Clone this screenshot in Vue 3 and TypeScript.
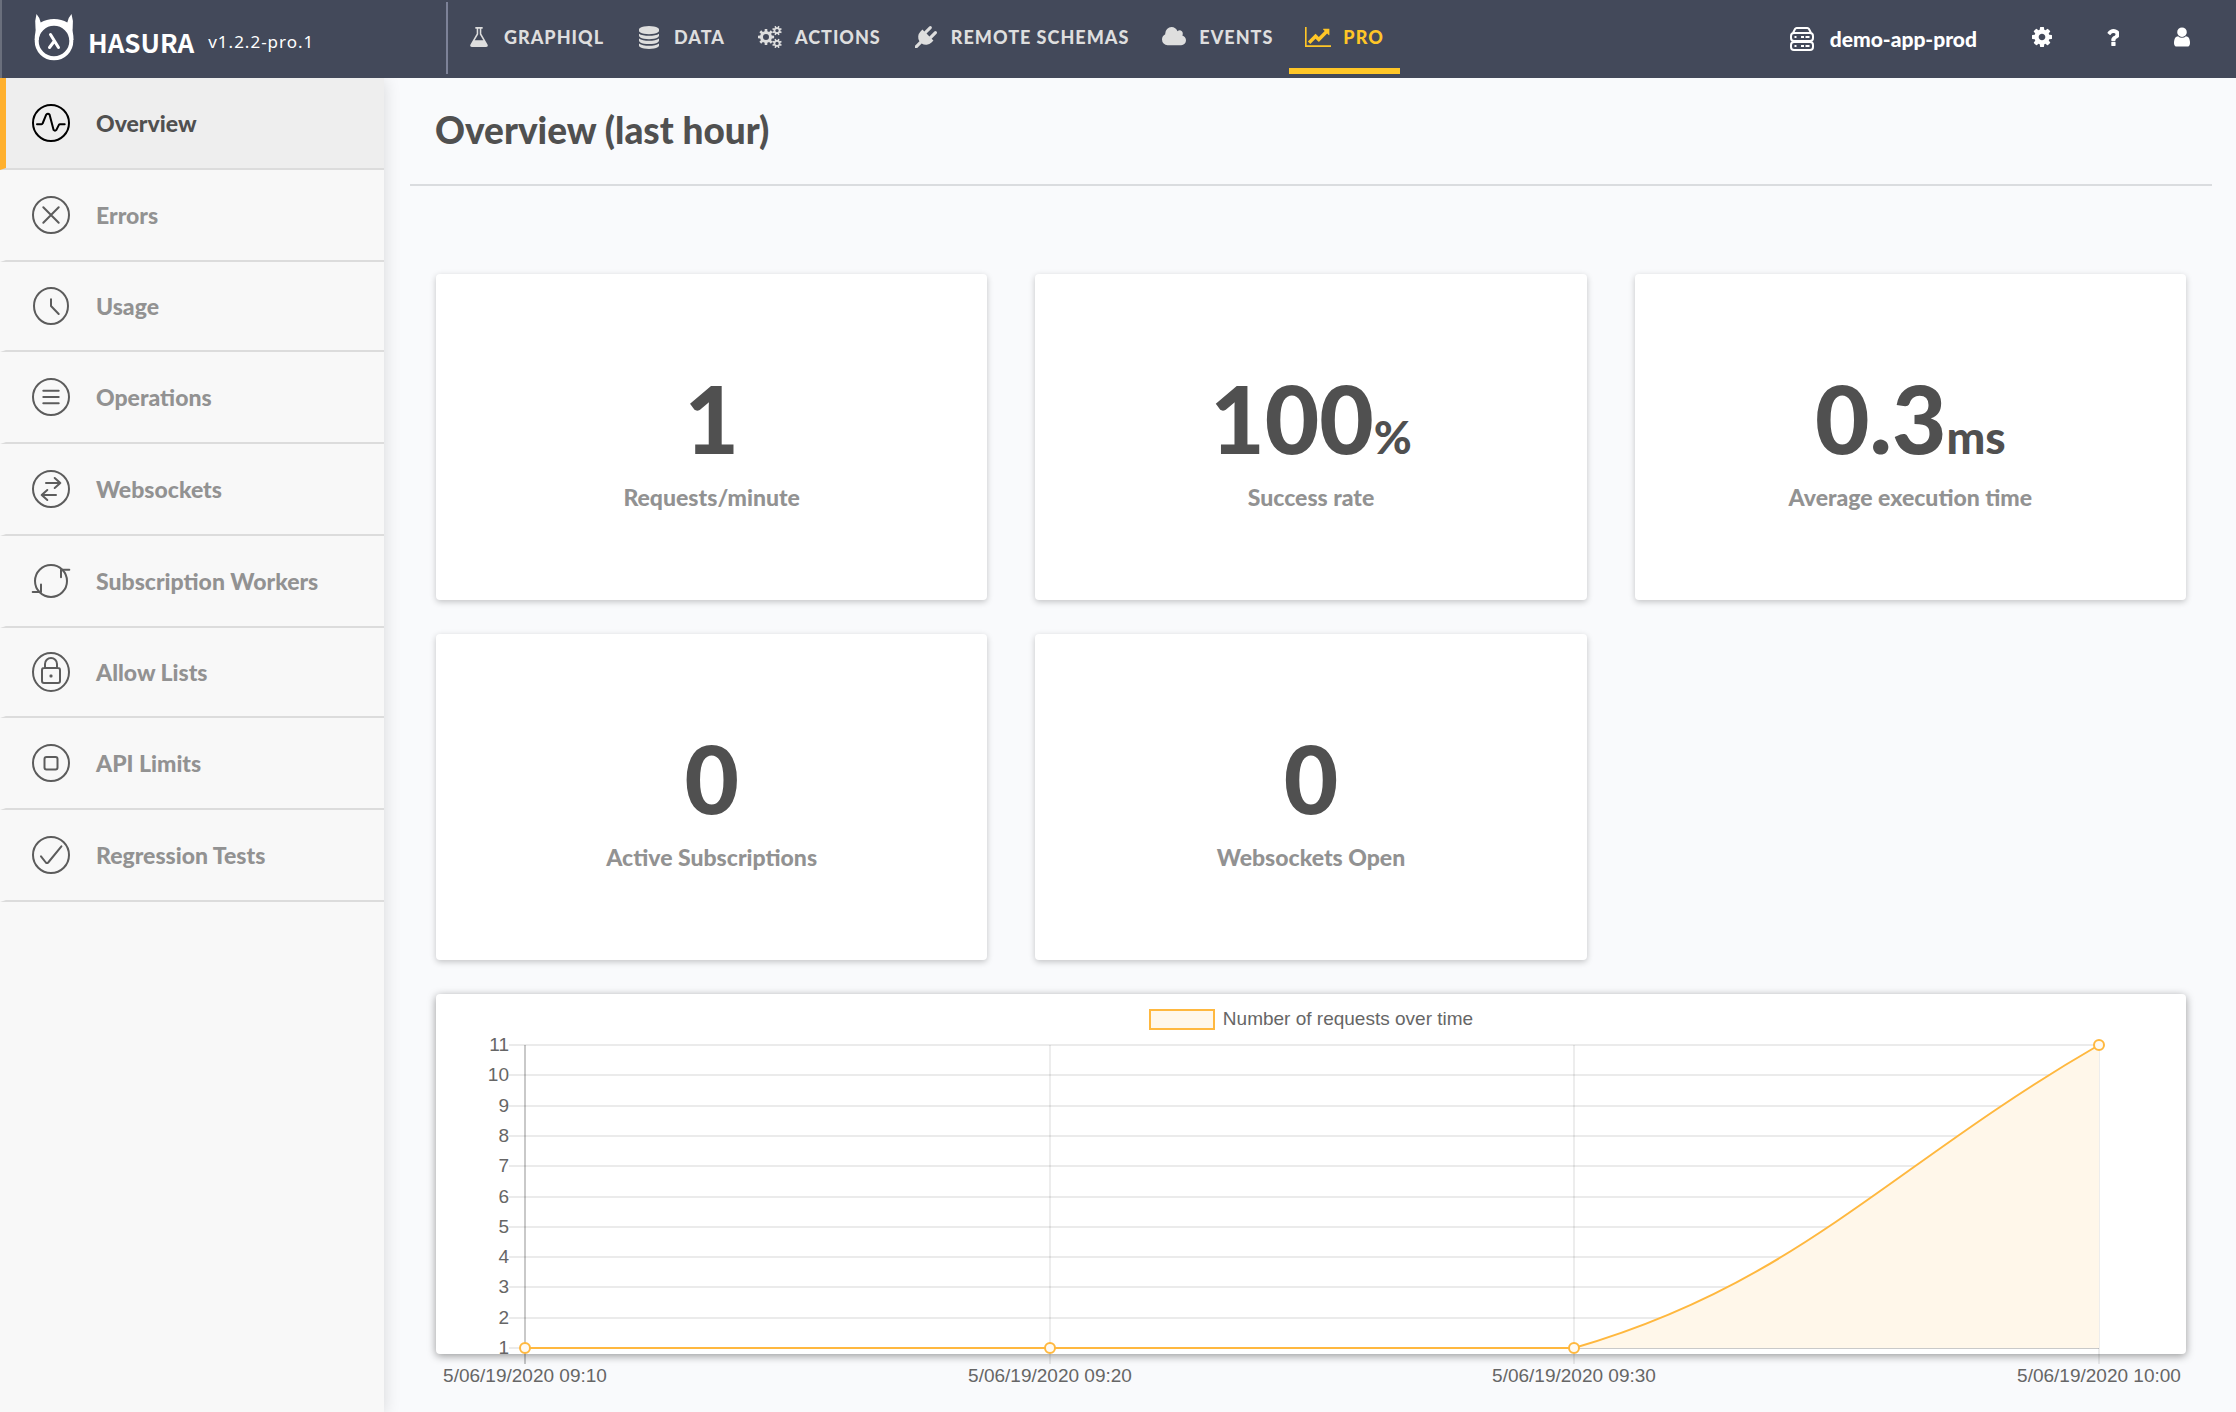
<script setup lang="ts">
import { computed, onBeforeUnmount, onMounted, ref } from 'vue'

/** Closed outline of a cog wheel, with its hole as a second subpath. */
function gearPath(cx: number, cy: number, outer: number, inner: number, hole: number, teeth: number, turn = 0): string {
  const step = (Math.PI * 2) / teeth
  const points: string[] = []
  for (let i = 0; i < teeth; i++) {
    const a = i * step + turn
    const corners: [number, number][] = [
      [inner, a - step * 0.3],
      [outer, a - step * 0.2],
      [outer, a + step * 0.2],
      [inner, a + step * 0.3],
    ]
    for (const [r, t] of corners) {
      points.push(`${(cx + r * Math.cos(t)).toFixed(2)} ${(cy + r * Math.sin(t)).toFixed(2)}`)
    }
  }
  const ring = `M${cx - hole} ${cy}a${hole} ${hole} 0 1 0 ${hole * 2} 0a${hole} ${hole} 0 1 0 ${-hole * 2} 0z`
  return `M${points.join('L')}z${ring}`
}

interface NavItem {
  label: string
  viewBox: string
  width: number
  height: number
  path: string
  active?: boolean
}

const navItems: NavItem[] = [
  {
    label: 'GRAPHIQL',
    viewBox: '150 128 1492 1536',
    width: 18,
    height: 20,
    path: 'M1591 1448q56 89 21.5 152.5t-140.5 63.5h-1152q-106 0-140.5-63.5t21.5-152.5l503-793v-399h-64q-26 0-45-19t-19-45 19-45 45-19h512q26 0 45 19t19 45-19 45-45 19h-64v399zm-779-725l-272 429h712l-272-429-20-31v-436h-128v436z',
  },
  {
    label: 'DATA',
    viewBox: '128 0 1536 1792',
    width: 20,
    height: 23,
    path: 'M896 768q237 0 443-43t325-127v170q0 69-103 128t-280 93.5-385 34.5-385-34.5-280-93.5-103-128v-170q119 84 325 127t443 43zm0 768q237 0 443-43t325-127v170q0 69-103 128t-280 93.5-385 34.5-385-34.5-280-93.5-103-128v-170q119 84 325 127t443 43zm0-384q237 0 443-43t325-127v170q0 69-103 128t-280 93.5-385 34.5-385-34.5-280-93.5-103-128v-170q119 84 325 127t443 43zm0-1152q208 0 385 34.5t280 93.5 103 128v128q0 69-103 128t-280 93.5-385 34.5-385-34.5-280-93.5-103-128v-128q0-69 103-128t280-93.5 385-34.5z',
  },
  {
    label: 'ACTIONS',
    viewBox: '0 0 24 22',
    width: 24,
    height: 22,
    path:
      gearPath(8, 11, 8.2, 6, 3, 8) +
      gearPath(19, 4.6, 4.9, 3.5, 1.7, 8, 0.39) +
      gearPath(19, 17.4, 4.9, 3.5, 1.7, 8, 0.39),
  },
  {
    label: 'REMOTE SCHEMAS',
    viewBox: '0 0 1792 1792',
    width: 22,
    height: 22,
    path: 'M1755 453q37 38 37 90.5t-37 90.5l-401 400 150 150-160 160q-163 163-389.5 186.5t-411.5-100.5l-362 362h-181v-181l362-362q-124-185-100.5-411.5t186.5-389.5l160-160 150 150 400-401q38-37 91-37t90 37 37 90.5-37 90.5l-400 401 234 234 401-400q38-37 91-37t90 37z',
  },
  {
    label: 'EVENTS',
    viewBox: '64 128 1920 1536',
    width: 24,
    height: 20,
    path: 'M1984 1152q0 159-112.5 271.5t-271.5 112.5h-1088q-185 0-316.5-131.5t-131.5-316.5q0-132 71-241.5t187-163.5q-2-28-2-43 0-212 150-362t362-150q158 0 286.5 88t187.5 230q70-62 166-62 106 0 181 75t75 181q0 75-41 138 129 30 213 134.5t84 239.5z',
  },
  {
    label: 'PRO',
    viewBox: '0 128 2048 1536',
    width: 26,
    height: 20,
    path: 'M2048 1536v128h-2048v-1536h128v1408h1920zm-128-1248v435q0 21-19.5 29.5t-35.5-7.5l-121-121-633 633q-10 10-23 10t-23-10l-233-233-416 416-192-192 585-585q10-10 23-10t23 10l233 233 464-464-121-121q-16-16-7.5-35.5t29.5-19.5h435q14 0 23 9t9 23z',
    active: true,
  },
]

interface SideItem {
  label: string
  rx: number
  ry: number
  path: string
  active?: boolean
  compact?: boolean
}

const sideItems: SideItem[] = [
  { label: 'Overview', rx: 18, ry: 18, path: 'M6 21.3h4.5q.8 0 1.1-.8l3.6-8.8q1.8-2 3.4 0l4 15.2q1.4 1.6 2.8 0l2.5-5q.4-.6 1.1-.6h4.7', active: true },
  { label: 'Errors', rx: 18, ry: 18, path: 'M12.3 12.3l15.4 15.4M27.7 12.3l-15.4 15.4' },
  { label: 'Usage', rx: 17, ry: 18, path: 'M20 13.3v6.7l7.7 8', compact: true },
  { label: 'Operations', rx: 18, ry: 18, path: 'M12.3 13.7h15.4M12.3 20h15.4M12.3 26.3h15.4' },
  { label: 'Websockets', rx: 18, ry: 18, path: 'M15 14h14.3M23.7 9l5.6 5-5.6 5M25 26h-14.3M16.3 21l-5.6 5 5.6 5' },
  { label: 'Subscription Workers', rx: 16, ry: 16, path: 'M38.3 8.7h-8.3v7.6M1.7 31h8.3v-7.6' },
  { label: 'Allow Lists', rx: 18, ry: 19, path: 'M13 16h14q2 0 2 2v11q0 2-2 2h-14q-2 0-2-2v-11q0-2 2-2zM14 16v-4a6 6 0 0 1 12 0v4M19.5 23.5h1v1h-1z', compact: true },
  { label: 'API Limits', rx: 18, ry: 18, path: 'M15.5 14h9q2 0 2 2v8.5q0 2-2 2h-9q-2 0-2-2v-8.5q0-2 2-2z' },
  { label: 'Regression Tests', rx: 18, ry: 18, path: 'M10 21.3l4.8 6.2q1.2 1.2 2.4 0l13.2-16.2' },
]

interface Metric {
  value: string
  unit?: string
  label: string
}

const metrics: Metric[] = [
  { value: '1', label: 'Requests/minute' },
  { value: '100', unit: '%', label: 'Success rate' },
  { value: '0.3', unit: 'ms', label: 'Average execution time' },
  { value: '0', label: 'Active Subscriptions' },
  { value: '0', label: 'Websockets Open' },
]

const samples = [
  { time: '5/06/19/2020 09:10', count: 1 },
  { time: '5/06/19/2020 09:20', count: 1 },
  { time: '5/06/19/2020 09:30', count: 1 },
  { time: '5/06/19/2020 10:00', count: 11 },
]

const chartBox = ref<HTMLElement | null>(null)
const chartWidth = ref(1750)
let observer: ResizeObserver | undefined

onMounted(() => {
  const el = chartBox.value
  if (!el) return
  chartWidth.value = el.clientWidth
  observer = new ResizeObserver(() => {
    chartWidth.value = el.clientWidth
  })
  observer.observe(el)
})
onBeforeUnmount(() => observer?.disconnect())

const plot = { left: 89, rightGap: 87, top: 1, height: 303, min: 1, max: 11 }

const right = computed(() => chartWidth.value - plot.rightGap)
const bottom = plot.top + plot.height

function yFor(count: number): number {
  return Math.round(bottom - ((count - plot.min) / (plot.max - plot.min)) * plot.height)
}

const points = computed(() =>
  samples.map((s, i) => ({
    x: Math.round(plot.left + ((right.value - plot.left) * i) / (samples.length - 1)),
    y: yFor(s.count),
    label: s.time,
  })),
)

const yTicks = Array.from({ length: plot.max - plot.min + 1 }, (_, i) => ({
  value: plot.max - i,
  y: yFor(plot.max - i),
}))

/** Smoothed line with a tension of 0.4, control points kept inside the plot. */
const line = computed(() => {
  const p = points.value
  const cap = (y: number) => Math.min(bottom, Math.max(plot.top, y))
  const controls = p.map((c, i) => {
    const a = p[Math.max(0, i - 1)]
    const b = p[Math.min(p.length - 1, i + 1)]
    const d0 = Math.hypot(c.x - a.x, c.y - a.y)
    const d1 = Math.hypot(b.x - c.x, b.y - c.y)
    const f0 = (0.4 * d0) / (d0 + d1)
    const f1 = (0.4 * d1) / (d0 + d1)
    return {
      inX: c.x - f0 * (b.x - a.x),
      inY: cap(c.y - f0 * (b.y - a.y)),
      outX: c.x + f1 * (b.x - a.x),
      outY: cap(c.y + f1 * (b.y - a.y)),
    }
  })
  let d = `M${p[0].x} ${p[0].y}`
  for (let i = 1; i < p.length; i++) {
    const from = controls[i - 1]
    const to = controls[i]
    d += `C${from.outX} ${from.outY} ${to.inX} ${to.inY} ${p[i].x} ${p[i].y}`
  }
  return d
})

const area = computed(() => `${line.value}V${bottom}H${plot.left}z`)
</script>

<template>
  <div class="app">
    <header class="topbar">
      <div class="brand">
        <svg class="logo" viewBox="0 0 40 50" width="40" height="50" aria-hidden="true">
          <path d="M2.5 1q3.2 3.4 4.2 8.6 5.6-3.6 13.3-3.6t13.3 3.6q1-5.2 4.2-8.6 2.3 7.2 1.2 14.2-.4 2 .1 4 .7 3 .7 7.8h-3.8a15.5 15.5 0 1 0-31 0h-4q0-4.8.7-7.8.5-2 .1-4-1.1-7 1-14.2z" />
          <circle cx="20" cy="28" r="17.3" class="logo-ring" />
          <path d="M16.5 21.5l8 13M20 28.5l-4.5 6" class="logo-lambda" />
        </svg>
        <span class="wordmark">HASURA</span>
        <span class="version">v1.2.2-pro.1</span>
      </div>
      <nav class="topnav">
        <a v-for="item in navItems" :key="item.label" href="#" class="topnav-link" :class="{ active: item.active }">
          <span class="topnav-icon">
            <svg :viewBox="item.viewBox" :width="item.width" :height="item.height" preserveAspectRatio="none" aria-hidden="true">
              <path :d="item.path" fill-rule="evenodd" />
            </svg>
          </span>
          <span>{{ item.label }}</span>
        </a>
      </nav>
      <div class="tools">
        <a href="#" class="project">
          <svg viewBox="0 0 24 24" width="24" height="24" class="server" aria-hidden="true">
            <path d="M3 6l2-4q.5-1 1.6-1h10.8q1.1 0 1.6 1l2 4" />
            <rect x="1" y="6" width="22" height="8" rx="3" />
            <rect x="1" y="15" width="22" height="8" rx="3" />
            <path d="M4.5 10h2M11 10h3M15.5 10h4M4.5 19h2M11 19h3M15.5 19h4" />
          </svg>
          <span>demo-app-prod</span>
        </a>
        <button type="button" class="tool" aria-label="Settings">
          <svg viewBox="128 128 1536 1536" width="20" height="20" aria-hidden="true">
            <path d="M1152 896q0-106-75-181t-181-75-181 75-75 181 75 181 181 75 181-75 75-181zm512-109v222q0 12-8 23t-20 13l-185 28q-19 54-39 91 35 50 107 138 10 12 10 25t-9 23q-27 37-99 108t-94 71q-12 0-26-9l-138-108q-44 23-91 38-16 136-29 186-7 28-36 28h-222q-14 0-24.5-8.5t-11.5-21.5l-28-184q-49-16-90-37l-141 107q-10 9-25 9-14 0-25-11-126-114-165-168-7-10-7-23 0-12 8-23 15-21 51-66.5t54-70.5q-27-50-41-99l-183-27q-13-2-21-12.5t-8-23.5v-222q0-12 8-23t19-13l186-28q14-46 39-92-40-57-107-138-10-12-10-24 0-10 9-23 26-36 98.5-107.5t94.5-71.5q13 0 26 10l138 107q44-23 91-38 16-136 29-186 7-28 36-28h222q14 0 24.5 8.5t11.5 21.5l28 184q49 16 90 37l142-107q9-9 24-9 13 0 25 10 129 119 165 170 7 8 7 22 0 12-8 23-15 21-51 66.5t-54 70.5q26 50 41 98l183 28q13 2 21 12.5t8 23.5z" />
          </svg>
        </button>
        <button type="button" class="tool" aria-label="Help">
          <svg viewBox="448 256 896 1280" width="12" height="17" aria-hidden="true">
            <path d="M1088 1256v240q0 16-12 28t-28 12h-240q-16 0-28-12t-12-28v-240q0-16 12-28t28-12h240q16 0 28 12t12 28zm316-600q0 54-15.5 101t-35 76.5-55 59.5-57.5 43.5-61 35.5q-41 23-68.5 65t-27.5 67q0 17-12 32.5t-28 15.5h-240q-15 0-25.5-18.5t-10.5-37.5v-45q0-83 65-156.5t143-108.5q59-27 84-56t25-76q0-42-46.5-74t-107.5-32q-65 0-108 29-35 25-107 115-13 16-31 16-12 0-25-8l-164-125q-13-10-15.5-25t5.5-28q160-266 464-266 80 0 161 31t146 83 106 127.5 41 158.5z" />
          </svg>
        </button>
        <button type="button" class="tool" aria-label="Account">
          <svg viewBox="256 128 1280 1536" width="16" height="20" aria-hidden="true">
            <path d="M1536 1399q0 109-62.5 187t-150.5 78h-854q-88 0-150.5-78t-62.5-187q0-85 8.5-160.5t31.5-152 58.5-131 94-89 134.5-34.5q131 128 313 128t313-128q76 0 134.5 34.5t94 89 58.5 131 31.5 152 8.5 160.5zm-256-887q0 159-112.5 271.5t-271.5 112.5-271.5-112.5-112.5-271.5 112.5-271.5 271.5-112.5 271.5 112.5 112.5 271.5z" />
          </svg>
        </button>
      </div>
    </header>

    <div class="body">
      <aside class="sidebar">
        <nav>
          <a
            v-for="item in sideItems"
            :key="item.label"
            href="#"
            class="side-link"
            :class="{ active: item.active, compact: item.compact }"
          >
            <svg viewBox="0 0 40 40" width="40" height="40" aria-hidden="true">
              <ellipse cx="20" cy="20" :rx="item.rx" :ry="item.ry" />
              <path :d="item.path" />
            </svg>
            <span>{{ item.label }}</span>
          </a>
        </nav>
      </aside>

      <main class="main">
        <h1 class="title">Overview (last hour)</h1>
        <section class="content">
          <div class="metrics">
            <article v-for="metric in metrics" :key="metric.label" class="metric">
              <p class="metric-value">{{ metric.value }}<span v-if="metric.unit" class="metric-unit">{{ metric.unit }}</span></p>
              <p class="metric-label">{{ metric.label }}</p>
            </article>
          </div>
          <figure ref="chartBox" class="chart">
            <figcaption class="legend">
              <span class="swatch"></span>
              <span>Number of requests over time</span>
            </figcaption>
            <svg class="plot" :width="chartWidth" height="310">
              <g class="grid">
                <line v-for="tick in yTicks" :key="tick.value" :x1="plot.left - 16" :x2="right" :y1="tick.y" :y2="tick.y" />
              </g>
              <g class="grid-v">
                <line v-for="p in points" :key="p.label" :x1="p.x" :x2="p.x" :y1="plot.top" :y2="bottom + 16" />
              </g>
              <line class="axis" :x1="plot.left" :x2="plot.left" :y1="plot.top" :y2="bottom + 16" />
              <line class="axis-x" :x1="plot.left" :x2="right" :y1="bottom" :y2="bottom" />
              <path class="area" :d="area" />
              <path class="line" :d="line" />
              <circle v-for="p in points" :key="p.label" class="dot" :cx="p.x" :cy="p.y" r="5" />
              <text v-for="tick in yTicks" :key="tick.value" class="tick" :x="plot.left - 16" :y="tick.y + 6" text-anchor="end">{{ tick.value }}</text>
              <text v-for="p in points" :key="p.label" class="tick" :x="p.x" :y="bottom + 34" text-anchor="middle">{{ p.label }}</text>
            </svg>
          </figure>
        </section>
      </main>
    </div>
  </div>
</template>

<style>
body {
  margin: 0;
  background: #f9fafc;
}
</style>

<style scoped>
.app {
  min-height: 100vh;
  display: flex;
  flex-direction: column;
  font-family: Lato, 'Noto Sans', sans-serif;
  color: #505050;
}

.topbar {
  display: flex;
  align-items: stretch;
  height: 78px;
  background: #43495a;
  box-shadow: inset 2px 0 #6a6f7c;
  color: #fff;
}

.brand {
  box-sizing: border-box;
  flex: none;
  width: 448px;
  display: flex;
  align-items: center;
  padding: 0 0 2px 34px;
  position: relative;
}

.brand::after {
  content: '';
  position: absolute;
  right: 0;
  top: 2px;
  bottom: 4px;
  width: 2px;
  background: #7d8298;
}

.logo {
  fill: #fff;
}

.logo-ring {
  fill: none;
  stroke: #fff;
  stroke-width: 4;
}

.logo-lambda {
  fill: none;
  stroke: #fff;
  stroke-width: 3;
  stroke-linecap: round;
}

.wordmark {
  margin: 8px 0 0 14px;
  font-family: 'Noto Sans CJK JP', 'Liberation Sans', sans-serif;
  font-size: 26px;
  line-height: 32px;
  font-weight: 700;
}

.version {
  margin: 8px 0 0 14px;
  font-family: 'Noto Sans', sans-serif;
  font-size: 17px;
  line-height: 24px;
  letter-spacing: 1px;
}

.topnav {
  display: flex;
  margin-left: 2px;
}

.topnav-link {
  display: flex;
  align-items: center;
  gap: 12px;
  padding: 0 16px;
  margin-bottom: 4px;
  border-bottom: 6px solid transparent;
  border-top: 6px solid transparent;
  color: #dedede;
  font-size: 18px;
  line-height: 24px;
  font-weight: 900;
  letter-spacing: 1px;
  text-decoration: none;
  white-space: nowrap;
}

.topnav-link.active {
  color: #ffc627;
  border-bottom-color: #ffc627;
}

.topnav-icon {
  width: 26px;
  height: 24px;
  display: flex;
  align-items: center;
  justify-content: center;
}

.topnav-icon svg,
.tool svg {
  display: block;
  fill: currentColor;
}

.tools {
  display: flex;
  align-items: center;
  gap: 55px;
  margin-left: auto;
  padding: 0 46px 4px 0;
}

.project {
  display: flex;
  align-items: center;
  gap: 16px;
  padding-top: 4px;
  color: #fff;
  font-size: 21px;
  line-height: 28px;
  font-weight: 900;
  text-decoration: none;
}

.server {
  fill: none;
  stroke: #fff;
  stroke-width: 2;
}

.tool {
  padding: 0;
  border: 0;
  margin: 0;
  background: none;
  color: #fff;
}

.body {
  flex: 1;
  display: flex;
}

.sidebar {
  flex: none;
  width: 384px;
  background: #f8f8f8;
  box-shadow: 0 2px 16px rgba(0, 0, 0, 0.14);
  clip-path: inset(0 -30px 0 0);
}

.side-link {
  box-sizing: border-box;
  display: flex;
  align-items: center;
  gap: 25px;
  min-height: 92px;
  padding-left: 25px;
  border-left: 6px solid transparent;
  border-bottom: 2px solid #dcdcdc;
  color: #929292;
  font-size: 23px;
  line-height: 30px;
  font-weight: 900;
  text-decoration: none;
}

.side-link.compact {
  min-height: 90px;
}

.side-link svg {
  flex: none;
  fill: none;
  stroke: #5c5c5c;
  stroke-width: 2;
  stroke-linecap: round;
  stroke-linejoin: round;
}

.side-link.active {
  background: #eee;
  border-left-color: #ffb02e;
  color: #505050;
}

.side-link.active svg {
  stroke: #000;
}

.main {
  flex: 1;
  min-width: 0;
  padding: 0 24px 0 26px;
}

.title {
  margin: 0;
  padding: 27px 25px 29px;
  border-bottom: 2px solid #dadcdf;
  font-size: 37px;
  line-height: 50px;
  font-weight: 900;
}

.content {
  padding: 88px 26px 0 26px;
}

.metrics {
  display: grid;
  grid-template-columns: repeat(3, 1fr);
  gap: 34px 48px;
}

.metric {
  padding: 96px 0 87px;
  border-radius: 4px;
  background: #fff;
  box-shadow: 0 2px 6px rgba(0, 0, 0, 0.22);
  text-align: center;
}

.metric-value {
  margin: 0 0 15px;
  font-size: 94px;
  line-height: 96px;
  font-weight: 900;
}

.metric-unit {
  font-size: 46px;
  line-height: 48px;
}

.metric-label {
  margin: 0;
  color: #929292;
  font-size: 23px;
  line-height: 32px;
  font-weight: 900;
}

.chart {
  height: 360px;
  margin: 34px 0 0;
  border-radius: 4px;
  background: #fff;
  box-shadow: 0 2px 8px rgba(0, 0, 0, 0.4);
  color: #666;
  font-family: 'Liberation Sans', sans-serif;
  font-size: 19px;
}

.legend {
  display: flex;
  align-items: center;
  justify-content: center;
  gap: 8px;
  height: 50px;
  line-height: 24px;
}

.swatch {
  box-sizing: border-box;
  width: 66px;
  height: 21px;
  border: 2px solid #ffb83f;
  background: #fff7ea;
}

.plot {
  display: block;
  overflow: visible;
}

.grid line {
  stroke: rgba(0, 0, 0, 0.08);
  stroke-width: 2;
}

.grid-v line {
  stroke: rgba(0, 0, 0, 0.14);
  stroke-width: 1;
}

.axis {
  stroke: rgba(0, 0, 0, 0.3);
  stroke-width: 1;
}

.axis-x {
  stroke: rgba(0, 0, 0, 0.14);
  stroke-width: 2;
}

.area {
  fill: #fff7ea;
}

.line {
  fill: none;
  stroke: #ffb83f;
  stroke-width: 2;
}

.dot {
  fill: #fffaf2;
  stroke: #ffb83f;
  stroke-width: 2;
}

.tick {
  fill: #666;
}
</style>
